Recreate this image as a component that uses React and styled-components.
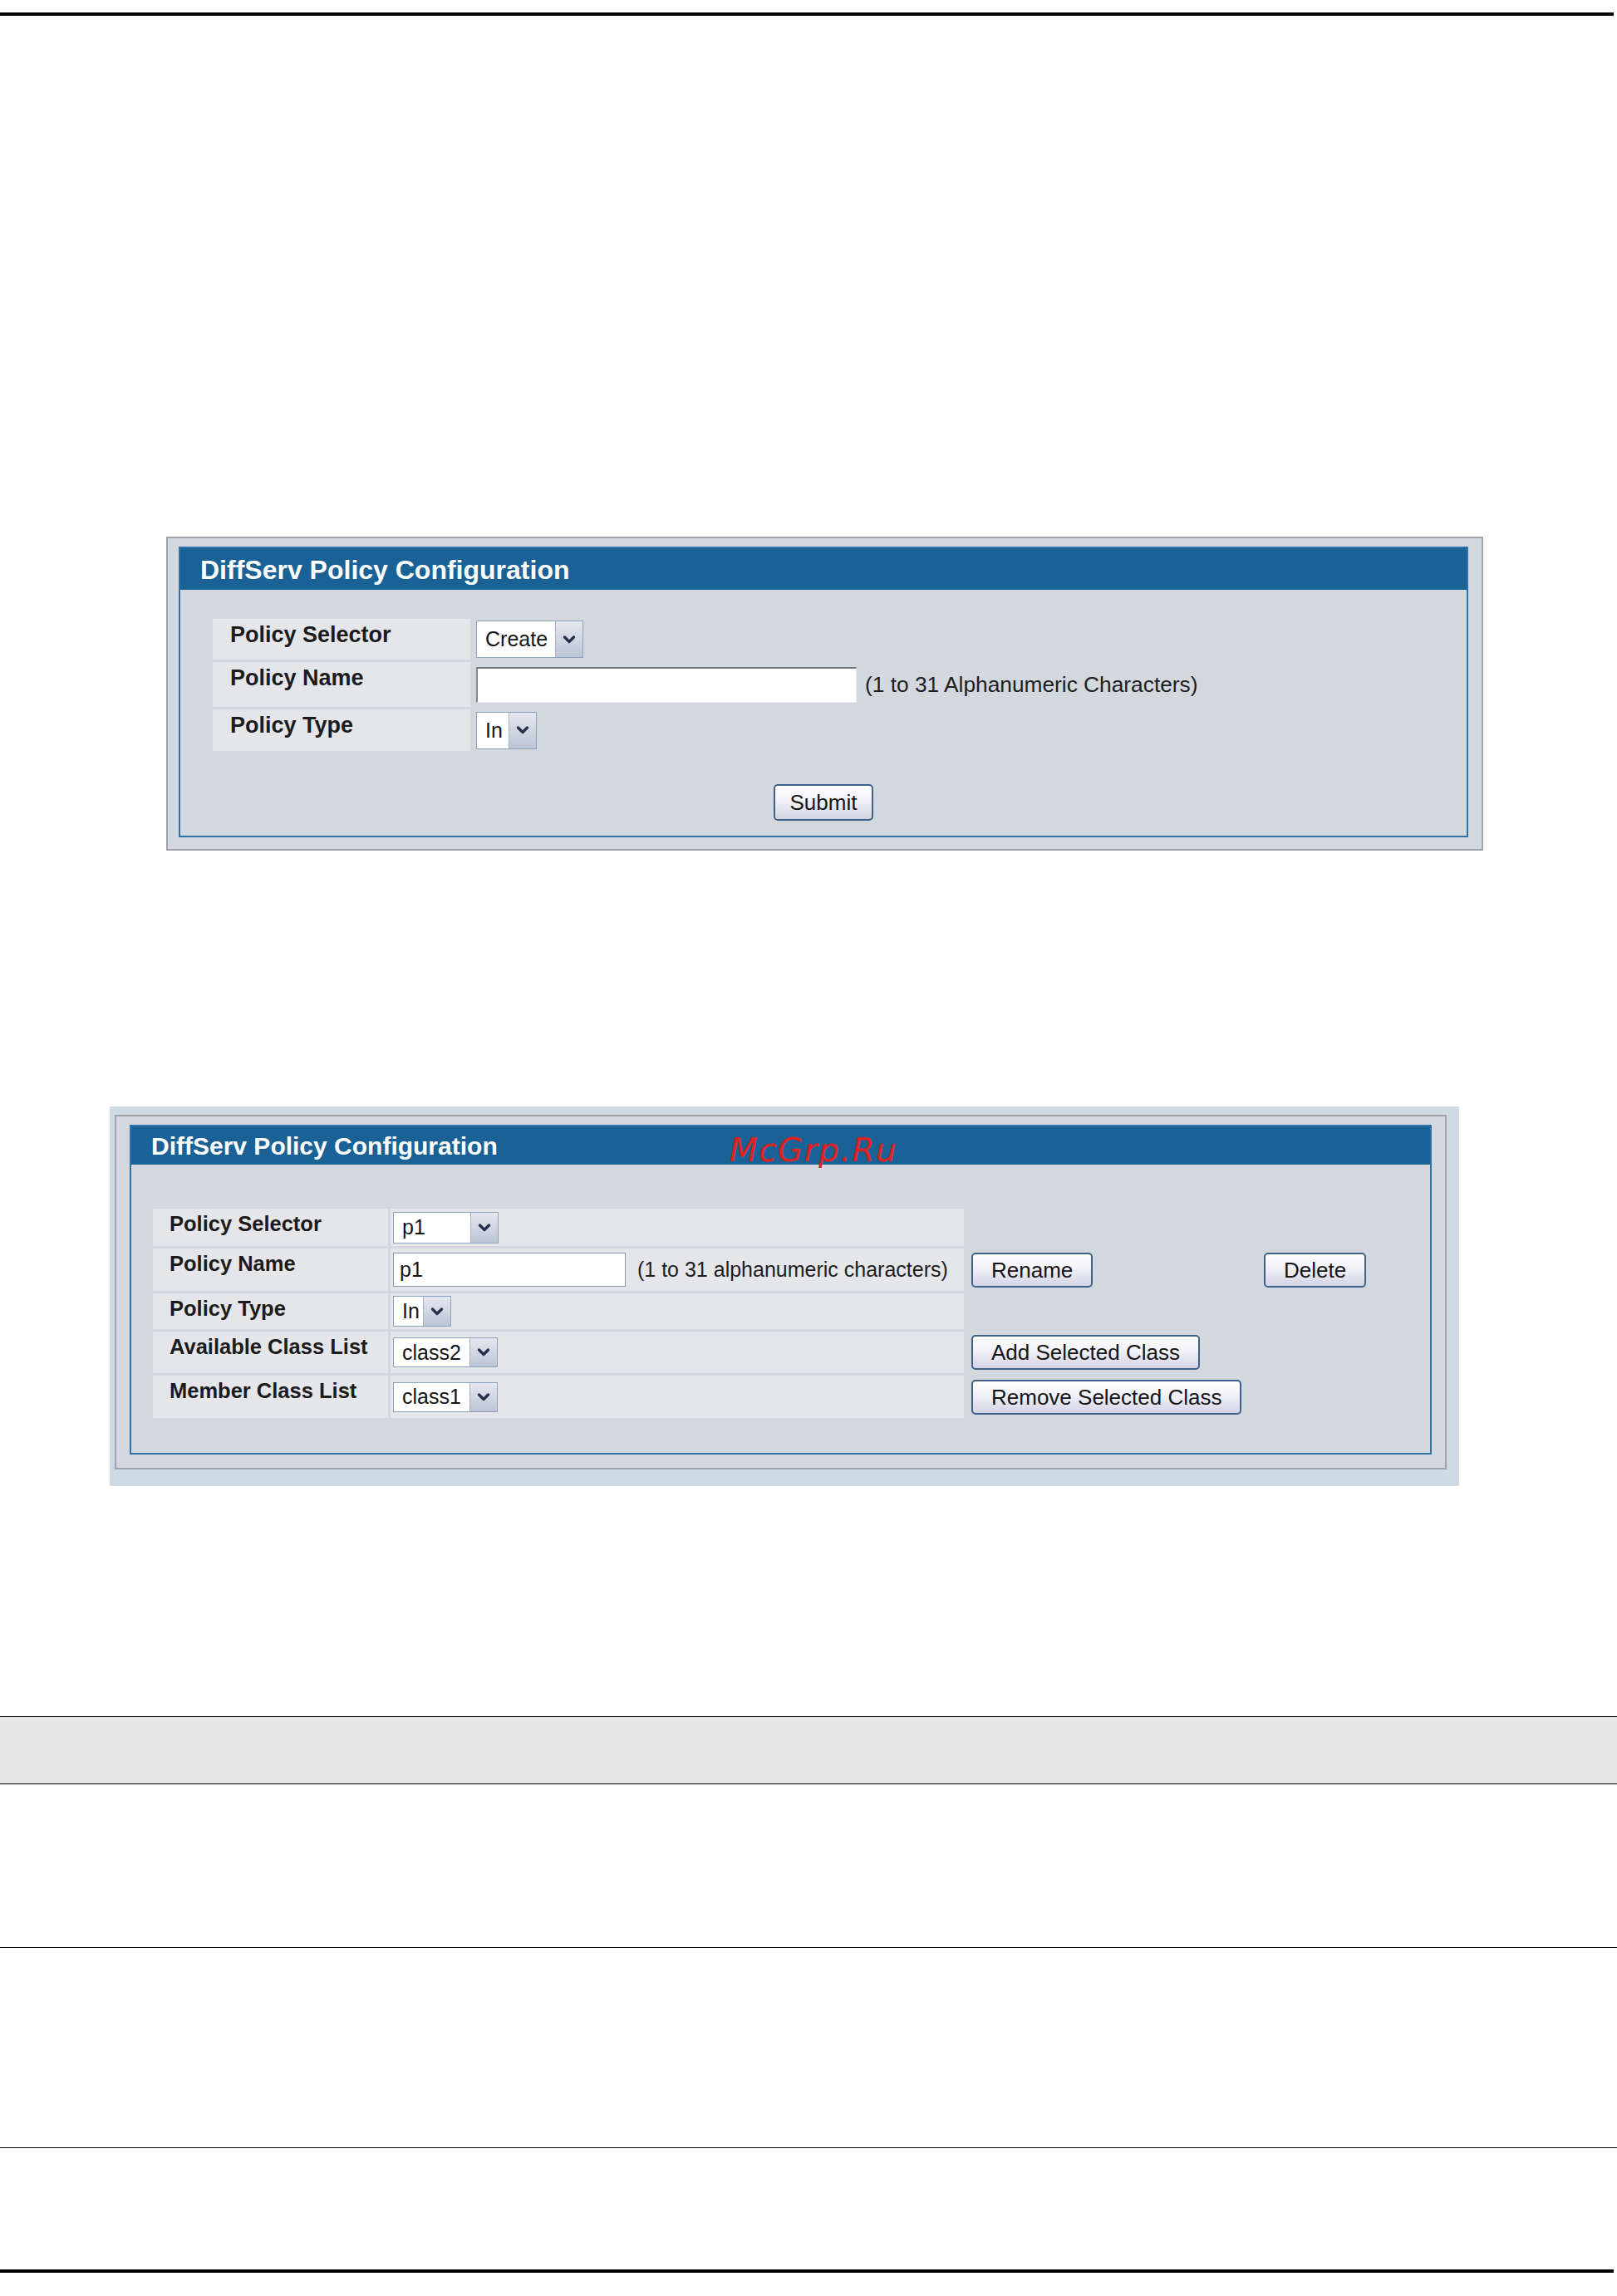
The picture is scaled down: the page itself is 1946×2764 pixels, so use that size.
import React from "react";
import styled, { createGlobalStyle } from "styled-components";

const GlobalStyle = createGlobalStyle`
  html, body {
    margin: 0;
    padding: 0;
    background: #fff;
  }
  body {
    font-family: "Liberation Sans", Arial, sans-serif;
    color: #151515;
  }
`;

const Page = styled.div`
  width: 1946px;
  padding: 15px 0 24px;
`;

const Rule = styled.div`
  width: 1942px;
  height: 4px;
  background: #000;
`;

/* ---------- panel chrome ---------- */

const Halo = styled.div`
  margin: ${(p) => p.$top}px 0 0 ${(p) => p.$left}px;
  width: ${(p) => p.$w}px;
  box-sizing: border-box;
  padding: 10px 15px 20px 6px;
  background: #cfdbe4;
`;

const Frame = styled.div`
  margin: ${(p) => p.$top || 0}px 0 0 ${(p) => p.$left || 0}px;
  width: ${(p) => p.$w}px;
  box-sizing: border-box;
  border: 2px solid #9fa3a8;
  background: #d3d7de;
  padding: ${(p) => p.$pad};
`;

const InnerBox = styled.div`
  border: 2px solid #2f72a8;
  background: #d3d7de;
`;

const Header = styled.div`
  position: relative;
  height: ${(p) => p.$h}px;
  box-sizing: border-box;
  padding: 2px 0 0 24px;
  display: flex;
  align-items: center;
  background: #1a6296;
  color: #fff;
  font-weight: 700;
  font-size: ${(p) => p.$size}px;
  line-height: 1;
`;

const Watermark = styled.span`
  position: absolute;
  left: 720px;
  top: 9px;
  font-family: "DejaVu Sans", sans-serif;
  font-style: italic;
  font-weight: 400;
  font-size: 39px;
  letter-spacing: 1.5px;
  line-height: 1;
  color: #e2211f;
`;

const Body = styled.div`
  padding: ${(p) => p.$pad};
`;

/* ---------- form grid ---------- */

const FormGrid = styled.div`
  display: grid;
  margin-left: ${(p) => p.$indent}px;
  grid-template-columns: ${(p) => p.$cols};
  grid-template-rows: ${(p) => p.$rows};
  column-gap: 3px;
  row-gap: 3px;
`;

const LabelCell = styled.div`
  background: #e5e6ea;
  box-sizing: border-box;
  padding: 6px 0 0 ${(p) => p.$indent}px;
  font-weight: 700;
  font-size: ${(p) => p.$size}px;
  line-height: 1;
  color: #1b1b1b;
  white-space: nowrap;
`;

const ValueCell = styled.div`
  display: flex;
  align-items: center;
  gap: ${(p) => p.$gap || 10}px;
  padding-left: ${(p) => p.$indent}px;
  background: ${(p) => (p.$shaded ? "#e5e6ea" : "transparent")};
`;

const ActionCell = styled.div`
  display: flex;
  align-items: center;
  padding-left: ${(p) => p.$indent || 0}px;
`;

const Hint = styled.span`
  font-size: ${(p) => p.$size}px;
  line-height: 1;
  color: #1e1e1e;
  white-space: nowrap;
`;

/* ---------- widgets ---------- */

const SelectBox = styled.div`
  display: inline-flex;
  width: ${(p) => p.$w}px;
  height: ${(p) => p.$h}px;
  box-sizing: border-box;
  border: 1px solid #8ea2bc;
  background: #fff;
`;

const SelectText = styled.span`
  flex: 1;
  display: flex;
  align-items: center;
  padding-left: 10px;
  font-size: 25px;
  line-height: 1;
  color: #141414;
`;

const SelectArrow = styled.span`
  width: 32px;
  display: flex;
  align-items: center;
  justify-content: center;
  border-left: 1px solid #a7b2c6;
  background: linear-gradient(#e4e8f0, #bcc5d5);
`;

const TextField = styled.input`
  width: ${(p) => p.$w}px;
  height: ${(p) => p.$h}px;
  box-sizing: border-box;
  margin: 0;
  padding: 0 0 0 7px;
  font-family: "Liberation Sans", Arial, sans-serif;
  font-size: 25px;
  color: #141414;
  background: #fff;
  outline: none;
  border: 1px solid #8f97a4;
  ${(p) =>
    p.$inset &&
    `
    border-top: 2px solid #777;
    border-left: 2px solid #888;
    border-right: 1px solid #e9e9e9;
    border-bottom: 1px solid #e9e9e9;
  `}
`;

const Button = styled.button`
  height: ${(p) => p.$h || 42}px;
  box-sizing: border-box;
  margin: 0;
  padding: 0 ${(p) => p.$px || 22}px;
  font-family: "Liberation Sans", Arial, sans-serif;
  font-size: 26px;
  line-height: 1;
  color: #151515;
  white-space: nowrap;
  border: 2px solid #3f6189;
  border-radius: 5px;
  background: linear-gradient(#ffffff 0%, #f1f1f8 45%, #d3d3e6 100%);
`;

const SubmitRow = styled.div`
  display: flex;
  justify-content: center;
  margin-top: 40px;
`;

/* ---------- document table ---------- */

const DocTable = styled.div`
  margin-top: 277px;
  width: 1946px;
  border-top: 1px solid #000;
`;

const DocRow = styled.div`
  height: ${(p) => p.$h}px;
  background: ${(p) => (p.$head ? "#e6e6e6" : "#fff")};
  border-bottom: 1px solid #000;
`;

const LastRow = styled.div`
  height: ${(p) => p.$h}px;
`;

function Chevron() {
  return (
    <svg width="16" height="12" viewBox="0 0 16 12">
      <polyline
        points="2.5,3 8,8.5 13.5,3"
        fill="none"
        stroke="#26304a"
        strokeWidth="3.4"
        strokeLinecap="round"
        strokeLinejoin="round"
      />
    </svg>
  );
}

function Select({ value, w, h }) {
  return (
    <SelectBox $w={w} $h={h}>
      <SelectText>{value}</SelectText>
      <SelectArrow>
        <Chevron />
      </SelectArrow>
    </SelectBox>
  );
}

function CreatePanel() {
  return (
    <Frame $top={627} $left={200} $w={1585} $pad="10px 16px 14px 13px">
      <InnerBox>
        <Header $h={50} $size={32}>
          DiffServ Policy Configuration
        </Header>
        <Body $pad="35px 0 18px 0">
          <FormGrid $indent={39} $cols="310px auto" $rows="49px 54px 50px">
            <LabelCell $size={27} $indent={21}>Policy Selector</LabelCell>
            <ValueCell $indent={4}>
              <Select value="Create" w={129} h={45} />
            </ValueCell>
            <LabelCell $size={27} $indent={21}>Policy Name</LabelCell>
            <ValueCell $indent={4} $gap={10}>
              <TextField $w={458} $h={43} $inset defaultValue="" />
              <Hint $size={26.3}>(1 to 31 Alphanumeric Characters)</Hint>
            </ValueCell>
            <LabelCell $size={27} $indent={21}>Policy Type</LabelCell>
            <ValueCell $indent={4}>
              <Select value="In" w={73} h={45} />
            </ValueCell>
          </FormGrid>
          <SubmitRow>
            <Button $h={44} $px={18}>Submit</Button>
          </SubmitRow>
        </Body>
      </InnerBox>
    </Frame>
  );
}

function EditPanel() {
  return (
    <Halo $top={308} $left={132} $w={1624}>
      <Frame $w={1603} $pad="10px 16px 16px 16px">
        <InnerBox>
          <Header $h={46} $size={30}>
            DiffServ Policy Configuration
            <Watermark>McGrp.Ru</Watermark>
          </Header>
          <Body $pad="53px 0 42px 0">
            <FormGrid
              $indent={26}
              $cols="283px 690px 355px auto"
              $rows="45px 51px 43px 50px 51px"
            >
              <LabelCell $size={25.5} $indent={20}>Policy Selector</LabelCell>
              <ValueCell $indent={3} $shaded>
                <Select value="p1" w={127} h={38} />
              </ValueCell>
              <ActionCell />
              <ActionCell />

              <LabelCell $size={25.5} $indent={20}>Policy Name</LabelCell>
              <ValueCell $indent={3} $gap={14} $shaded>
                <TextField $w={280} $h={41} defaultValue="p1" />
                <Hint $size={25}>(1 to 31 alphanumeric characters)</Hint>
              </ValueCell>
              <ActionCell $indent={6}>
                <Button>Rename</Button>
              </ActionCell>
              <ActionCell>
                <Button>Delete</Button>
              </ActionCell>

              <LabelCell $size={25.5} $indent={20}>Policy Type</LabelCell>
              <ValueCell $indent={3} $shaded>
                <Select value="In" w={70} h={37} />
              </ValueCell>
              <ActionCell />
              <ActionCell />

              <LabelCell $size={25.5} $indent={20}>Available Class List</LabelCell>
              <ValueCell $indent={3} $shaded>
                <Select value="class2" w={126} h={36} />
              </ValueCell>
              <ActionCell $indent={6}>
                <Button>Add Selected Class</Button>
              </ActionCell>
              <ActionCell />

              <LabelCell $size={25.5} $indent={20}>Member Class List</LabelCell>
              <ValueCell $indent={3} $shaded>
                <Select value="class1" w={126} h={36} />
              </ValueCell>
              <ActionCell $indent={6}>
                <Button>Remove Selected Class</Button>
              </ActionCell>
              <ActionCell />
            </FormGrid>
          </Body>
        </InnerBox>
      </Frame>
    </Halo>
  );
}

export default function App() {
  return (
    <>
      <GlobalStyle />
      <Page>
        <Rule />
        <CreatePanel />
        <EditPanel />
        <DocTable>
          <DocRow $head $h={80} />
          <DocRow $h={196} />
          <DocRow $h={240} />
          <LastRow $h={146} />
        </DocTable>
        <Rule />
      </Page>
    </>
  );
}
